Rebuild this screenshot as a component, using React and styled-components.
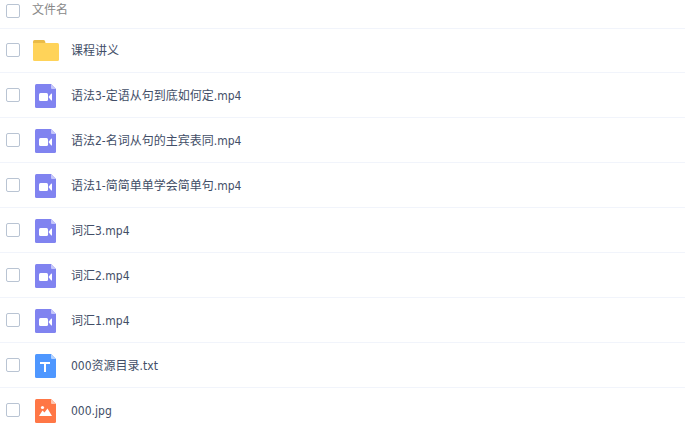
import { useState } from "react";
import styled, { createGlobalStyle } from "styled-components";

const TEXT_COLOR = "#424e67";
const HEADER_COLOR = "#888888";
const LINE_COLOR = "#f1f4fb";
const BOX_COLOR = "#b9c4d3";

const FILES = [
  { type: "folder", name: "课程讲义" },
  { type: "video", name: "语法3-定语从句到底如何定.mp4" },
  { type: "video", name: "语法2-名词从句的主宾表同.mp4" },
  { type: "video", name: "语法1-简简单单学会简单句.mp4" },
  { type: "video", name: "词汇3.mp4" },
  { type: "video", name: "词汇2.mp4" },
  { type: "video", name: "词汇1.mp4" },
  { type: "text", name: "000资源目录.txt" },
  { type: "image", name: "000.jpg" },
];

const GlobalStyle = createGlobalStyle`
  body {
    margin: 0;
    background: #ffffff;
    font-family: "DejaVu Sans Condensed", "Noto Sans CJK SC", sans-serif;
    font-size: 12px;
    line-height: 18px;
    color: ${TEXT_COLOR};
  }
`;

const Table = styled.table`
  width: 100%;
  border-spacing: 0;
  table-layout: fixed;
`;

const CheckCol = styled.col`
  width: 32px;
`;

const IconCol = styled.col`
  width: 28px;
`;

const HeadCell = styled.th`
  box-sizing: border-box;
  height: 28px;
  padding: 0 0 8px;
  vertical-align: middle;
  text-align: left;
  font-weight: normal;
  color: ${HEADER_COLOR};
`;

const HeadCheckCell = styled(HeadCell)`
  padding: 0 0 6px 6px;
`;

const Row = styled.tr`
  &:first-child > td {
    padding-bottom: 1px;
    border-top: 1px solid ${LINE_COLOR};
  }
`;

const Cell = styled.td`
  box-sizing: border-box;
  height: 45px;
  padding: 0;
  vertical-align: middle;
  border-bottom: 1px solid ${LINE_COLOR};
`;

const CheckCell = styled(Cell)`
  padding-left: 6px;
`;

const IconCell = styled(Cell)`
  padding-top: 2px;

  svg {
    display: block;
    margin: 0 auto;
  }
`;

const NameCell = styled(Cell)`
  padding-top: 2px;
  padding-left: 11px;
`;

const FileName = styled.label`
  display: block;
  overflow: hidden;
  white-space: nowrap;
  text-overflow: ellipsis;
  cursor: pointer;
`;

const Checkbox = styled.input`
  appearance: none;
  display: block;
  box-sizing: border-box;
  width: 14px;
  height: 14px;
  margin: 0;
  border: 1px solid ${BOX_COLOR};
  border-radius: 2px;
  background: #ffffff;
  cursor: pointer;

  &:checked {
    border-color: #4e97ff;
    background: #4e97ff;
  }
`;

const FolderIcon = () => (
  <svg width="26" height="22" viewBox="0 0 26 22" aria-hidden="true">
    <path d="M0 5V1.5Q0 0 1.5 0H10.5Q11.5 0 12 1L13 5Z" fill="#eabb47" />
    <path
      d="M0 3H24.5Q26 3 26 4.5V19.5Q26 21 24.5 21H1.5Q0 21 0 19.5Z"
      fill="#ffd359"
    />
  </svg>
);

const Page = ({ color, fold, children }) => (
  <svg width="22" height="24" viewBox="0 0 22 24" aria-hidden="true">
    <path
      d="M1.5 0H16L21 5V22.5Q21 24 19.5 24H1.5Q0 24 0 22.5V1.5Q0 0 1.5 0Z"
      fill={color}
    />
    <path d="M16 0L21 5H17Q16 5 16 4Z" fill={fold} />
    {children}
  </svg>
);

const VideoIcon = () => (
  <Page color="#8083f0" fold="#c5c6fa">
    <rect x="4" y="9" width="9" height="8" rx="1.5" fill="#ffffff" />
    <path
      d="M13.5 13L16 9.7Q17 9 17 10V16Q17 17 16 16.3Z"
      fill="#ffffff"
    />
  </Page>
);

const TextIcon = () => (
  <Page color="#4e97ff" fold="#b3d2ff">
    <path d="M5 8H15V10H11V18H9V10H5Z" fill="#ffffff" />
  </Page>
);

const ImageIcon = () => (
  <Page color="#ff7746" fold="#ffc6b0">
    <circle cx="7.5" cy="8.5" r="1.6" fill="#ffffff" />
    <path
      d="M4 17L7.5 11.5L9.5 13.5L12.5 9.5L17 17Z"
      fill="#ffffff"
    />
  </Page>
);

const ICONS = {
  folder: FolderIcon,
  video: VideoIcon,
  text: TextIcon,
  image: ImageIcon,
};

const FileRow = ({ id, file, checked, onToggle }) => {
  const Icon = ICONS[file.type];

  return (
    <Row>
      <CheckCell>
        <Checkbox type="checkbox" id={id} checked={checked} onChange={onToggle} />
      </CheckCell>
      <IconCell>
        <Icon />
      </IconCell>
      <NameCell>
        <FileName htmlFor={id}>{file.name}</FileName>
      </NameCell>
    </Row>
  );
};

const App = () => {
  const [selected, setSelected] = useState([]);

  const allSelected = selected.length === FILES.length;

  const toggleAll = () =>
    setSelected(allSelected ? [] : FILES.map(({ name }) => name));

  const toggleFile = (name) =>
    setSelected((prev) =>
      prev.includes(name) ? prev.filter((n) => n !== name) : [...prev, name]
    );

  return (
    <>
      <GlobalStyle />
      <Table>
        <colgroup>
          <CheckCol />
          <IconCol />
          <col />
        </colgroup>
        <thead>
          <tr>
            <HeadCheckCell>
              <Checkbox
                type="checkbox"
                id="file-all"
                checked={allSelected}
                onChange={toggleAll}
              />
            </HeadCheckCell>
            <HeadCell colSpan={2}>
              <FileName htmlFor="file-all">文件名</FileName>
            </HeadCell>
          </tr>
        </thead>
        <tbody>
          {FILES.map((file, index) => (
            <FileRow
              key={file.name}
              id={`file-${index}`}
              file={file}
              checked={selected.includes(file.name)}
              onToggle={() => toggleFile(file.name)}
            />
          ))}
        </tbody>
      </Table>
    </>
  );
};

export default App;
